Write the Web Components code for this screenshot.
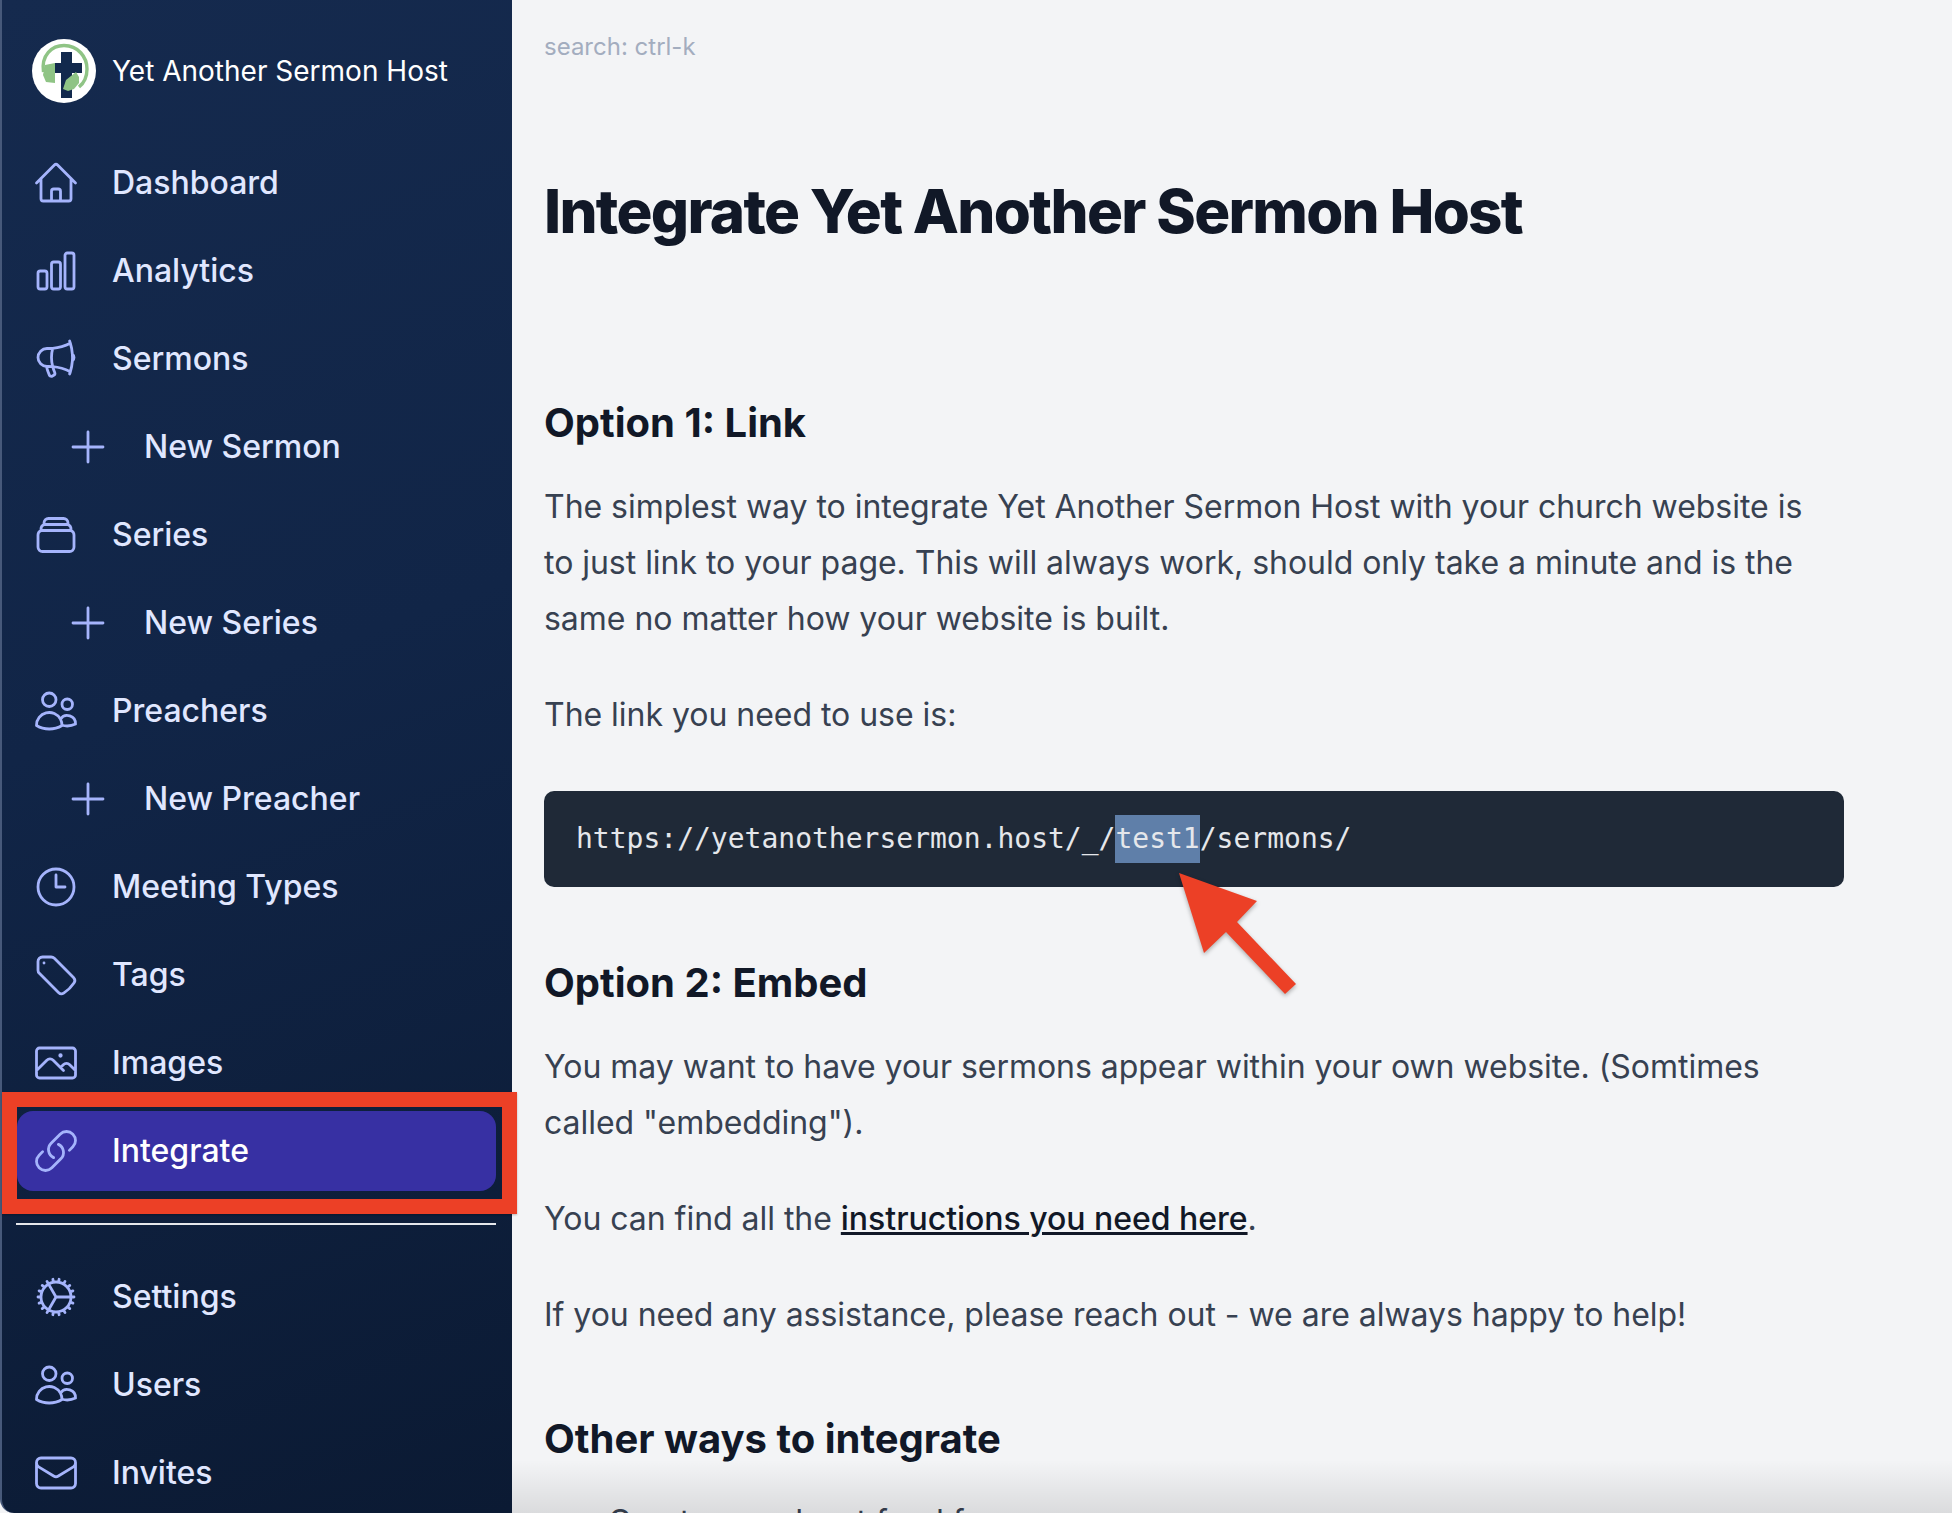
<!DOCTYPE html>
<html>
<head>
<meta charset="utf-8">
<style>
html,body{margin:0;height:100%;overflow:hidden;background:#f3f4f6;}
body{font-family:Inter,"Liberation Sans",sans-serif;}
</style>
</head>
<body>
<sermon-app>
  <sermon-sidebar slot="side">
    <brand-row>Yet Another Sermon Host</brand-row>
    <nav-item icon="home">Dashboard</nav-item>
    <nav-item icon="chart">Analytics</nav-item>
    <nav-item icon="mega">Sermons</nav-item>
    <nav-item icon="plus" sub>New Sermon</nav-item>
    <nav-item icon="stack">Series</nav-item>
    <nav-item icon="plus" sub>New Series</nav-item>
    <nav-item icon="users">Preachers</nav-item>
    <nav-item icon="plus" sub>New Preacher</nav-item>
    <nav-item icon="clock">Meeting Types</nav-item>
    <nav-item icon="tag">Tags</nav-item>
    <nav-item icon="image">Images</nav-item>
    <nav-item icon="link" active>Integrate</nav-item>
    <nav-rule></nav-rule>
    <nav-item icon="cog">Settings</nav-item>
    <nav-item icon="users">Users</nav-item>
    <nav-item icon="mail">Invites</nav-item>
  </sermon-sidebar>
  <integrate-page></integrate-page>
</sermon-app>

<template id="icons">
  <svg data-i="home" viewBox="0 0 24 24"><path d="M2.25 12l8.954-8.955c.44-.439 1.152-.439 1.591 0L21.75 12M4.5 9.75v10.125c0 .621.504 1.125 1.125 1.125H9.75v-4.875c0-.621.504-1.125 1.125-1.125h2.25c.621 0 1.125.504 1.125 1.125V21h4.125c.621 0 1.125-.504 1.125-1.125V9.75M8.25 21h8.25"/></svg>
  <svg data-i="chart" viewBox="0 0 24 24"><path d="M3 13.125C3 12.504 3.504 12 4.125 12h2.25c.621 0 1.125.504 1.125 1.125v6.75C7.5 20.496 6.996 21 6.375 21h-2.25A1.125 1.125 0 013 19.875v-6.75zM9.75 8.625c0-.621.504-1.125 1.125-1.125h2.25c.621 0 1.125.504 1.125 1.125v11.25c0 .621-.504 1.125-1.125 1.125h-2.25a1.125 1.125 0 01-1.125-1.125V8.625zM16.5 4.125c0-.621.504-1.125 1.125-1.125h2.25C20.496 3 21 3.504 21 4.125v15.75c0 .621-.504 1.125-1.125 1.125h-2.25a1.125 1.125 0 01-1.125-1.125V4.125z"/></svg>
  <svg data-i="mega" viewBox="0 0 24 24"><path d="M10.34 15.84c-.688-.06-1.386-.09-2.09-.09H7.5a4.5 4.5 0 110-9h.75c.704 0 1.402-.03 2.09-.09m0 9.18c.253.962.584 1.892.985 2.783.247.55.06 1.21-.463 1.511l-.657.38c-.551.318-1.26.117-1.527-.461a20.845 20.845 0 01-1.44-4.282m3.102.069a18.03 18.03 0 01-.59-4.59c0-1.586.205-3.124.59-4.59m0 9.18a23.848 23.848 0 018.835 2.535M10.34 6.66a23.847 23.847 0 008.835-2.535m0 0A23.74 23.74 0 0018.795 3m.38 1.125a23.91 23.91 0 011.014 5.395m-1.014 8.855c-.118.38-.245.754-.38 1.125m.38-1.125a23.91 23.91 0 001.014-5.395m0-3.46c.495.413.811 1.035.811 1.73 0 .695-.316 1.317-.811 1.73m0-3.46a24.347 24.347 0 010 3.46"/></svg>
  <svg data-i="plus" viewBox="0 0 24 24"><path d="M12 4.5v15m7.5-7.5h-15"/></svg>
  <svg data-i="stack" viewBox="0 0 24 24"><path d="M6 6.878V6a2.25 2.25 0 012.25-2.25h7.5A2.25 2.25 0 0118 6v.878m-12 0c.235-.083.487-.128.75-.128h10.5c.263 0 .515.045.75.128m-12 0A2.251 2.251 0 004.5 9v.878m13.5-3A2.25 2.25 0 0119.5 9v.878m0 0a2.246 2.246 0 00-.75-.128H5.25c-.263 0-.515.045-.75.128m15 0A2.25 2.25 0 0121 12v6a2.25 2.25 0 01-2.25 2.25H5.25A2.25 2.25 0 013 18v-6c0-.98.626-1.813 1.5-2.122"/></svg>
  <svg data-i="users" viewBox="0 0 24 24"><path d="M15 19.128a9.38 9.38 0 002.625.372 9.337 9.337 0 004.121-.952 4.125 4.125 0 00-7.533-2.493M15 19.128v-.003c0-1.113-.285-2.16-.786-3.07M15 19.128v.106A12.318 12.318 0 018.624 21c-2.331 0-4.512-.645-6.374-1.766l-.001-.109a6.375 6.375 0 0111.964-3.07M12 6.375a3.375 3.375 0 11-6.75 0 3.375 3.375 0 016.75 0zm8.25 2.25a2.625 2.625 0 11-5.25 0 2.625 2.625 0 015.25 0z"/></svg>
  <svg data-i="clock" viewBox="0 0 24 24"><path d="M12 6v6h4.5m4.5 0a9 9 0 11-18 0 9 9 0 0118 0z"/></svg>
  <svg data-i="tag" viewBox="0 0 24 24"><path d="M9.568 3H5.25A2.25 2.25 0 003 5.25v4.318c0 .597.237 1.17.659 1.591l9.581 9.581c.699.699 1.78.872 2.607.33a18.095 18.095 0 005.223-5.223c.542-.827.369-1.908-.33-2.607L11.16 3.66A2.25 2.25 0 009.568 3z"/><path d="M6 6h.008v.008H6V6z"/></svg>
  <svg data-i="image" viewBox="0 0 24 24"><path d="M2.25 15.75l5.159-5.159a2.25 2.25 0 013.182 0l5.159 5.159m-1.5-1.5l1.409-1.409a2.25 2.25 0 013.182 0l2.909 2.909m-18 3.75h16.5a1.5 1.5 0 001.5-1.5V6a1.5 1.5 0 00-1.5-1.5H3.75A1.5 1.5 0 002.25 6v12a1.5 1.5 0 001.5 1.5zm10.5-11.25h.008v.008h-.008V8.25zm.375 0a.375.375 0 11-.75 0 .375.375 0 01.75 0z"/></svg>
  <svg data-i="link" viewBox="0 0 24 24"><path d="M13.19 8.688a4.5 4.5 0 011.242 7.244l-4.5 4.5a4.5 4.5 0 01-6.364-6.364l1.757-1.757m13.35-.622l1.757-1.757a4.5 4.5 0 00-6.364-6.364l-4.5 4.5a4.5 4.5 0 001.242 7.244"/></svg>
  <svg data-i="cog" viewBox="0 0 24 24"><path d="M4.5 12a7.5 7.5 0 0015 0m-15 0a7.5 7.5 0 1115 0m-15 0H3m16.5 0H21m-1.5 0H12m-8.457 3.077l1.41-.513m14.095-5.13l1.41-.513M5.106 17.785l1.15-.964m11.49-9.642l1.149-.964M7.501 19.795l.75-1.3m7.5-12.99l.75-1.3m-6.063 16.658l.26-1.477m2.605-14.772l.26-1.477m0 17.726l-.26-1.477M10.698 4.614l-.26-1.477M16.5 19.794l-.75-1.299M7.5 4.205L12 12m6.894 5.785l-1.149-.964M6.256 7.178l-1.15-.964m15.352 8.864l-1.41-.513M4.954 9.435l-1.41-.514M12.002 12l-3.75 6.495"/></svg>
  <svg data-i="mail" viewBox="0 0 24 24"><path d="M21.75 6.75v10.5a2.25 2.25 0 01-2.25 2.25h-15a2.25 2.25 0 01-2.25-2.25V6.75m19.5 0A2.25 2.25 0 0019.5 4.5h-15a2.25 2.25 0 00-2.25 2.25m19.5 0v.243a2.25 2.25 0 01-1.07 1.916l-7.5 4.615a2.25 2.25 0 01-2.36 0L3.32 8.91a2.25 2.25 0 01-1.07-1.916V6.75"/></svg>
</template>

<script>
const iconBank = document.getElementById('icons').content;

class SermonApp extends HTMLElement{
  constructor(){
    super();
    this.attachShadow({mode:'open'}).innerHTML=`
    <style>
      :host{display:grid;grid-template-columns:512px 1fr;height:1513px;overflow:hidden;position:relative;}
      .fade{position:absolute;left:512px;right:0;bottom:0;height:53px;pointer-events:none;
        background:linear-gradient(to bottom,rgba(0,0,0,0),rgba(0,0,0,.1));}
      /* red annotation round the active item */
      .frame{position:absolute;left:2px;top:1092px;width:515px;height:122px;box-sizing:border-box;
        border:15px solid #ec4026;box-shadow:0 1px 2px rgba(0,0,0,.25);}
    </style>
    <slot name="side"></slot><slot></slot><div class="fade"></div><div class="frame"></div>`;
  }
}

class SermonSidebar extends HTMLElement{
  constructor(){
    super();
    this.attachShadow({mode:'open'}).innerHTML=`
    <style>
      :host{display:flex;flex-direction:column;box-sizing:border-box;height:1513px;padding:27px 16px 0 15px;
        border-left:2px solid #47597a;border-bottom-left-radius:14px;
        background:linear-gradient(160deg,#152a4e 0%,#112547 45%,#0b1a33 100%);}
    </style>
    <slot></slot>`;
  }
}

class BrandRow extends HTMLElement{
  constructor(){
    super();
    this.attachShadow({mode:'open'}).innerHTML=`
    <style>
      :host{display:flex;align-items:center;gap:16px;height:88px;padding-left:15px;margin-bottom:28px;
        color:#fff;font-size:28px;flex:none;}
      svg{width:64px;height:64px;flex:none;}
    </style>
    <svg viewBox="0 0 64 64">
      <circle cx="32" cy="32" r="32" fill="#fff"/>
      <path d="M11.5 33C9 16 20 6.5 32 6.5 46 6.5 55 18 55 30c0 7-3 14-8 18" fill="none" stroke="#8fc485" stroke-width="3.4"/>
      <path d="M13 26l10-2v20l-9-1-3-7z" fill="#8fc485"/>
      <path d="M29 13h11v11h10v10H40v25H29V34h-6V24h6z" fill="#12294d"/>
      <path d="M31 50l3-9 10-8 3 5v6l-5 6-6 2z" fill="#8fc485"/>
    </svg>
    <slot></slot>`;
  }
}

class NavItem extends HTMLElement{
  constructor(){
    super();
    this.attachShadow({mode:'open'}).innerHTML=`
    <style>
      :host{display:flex;align-items:center;gap:32px;box-sizing:border-box;height:80px;margin-bottom:8px;padding:0 0 2px 17px;
        border-radius:16px;color:#e0e7ff;font-size:32px;font-weight:500;flex:none;}
      :host([sub]){padding-left:49px;}
      :host([active]){background:#3730a3;color:#fff;}
      svg{width:48px;height:48px;flex:none;fill:none;stroke:#a5b4fc;stroke-width:1.4;stroke-linecap:round;stroke-linejoin:round;margin:2px 0 0 -2px;}
    </style>
    <span id="i"></span><slot></slot>`;
    const src=iconBank.querySelector(`[data-i="${this.getAttribute('icon')}"]`);
    this.shadowRoot.getElementById('i').replaceWith(src.cloneNode(true));
  }
}

class NavRule extends HTMLElement{
  constructor(){
    super();
    this.attachShadow({mode:'open'}).innerHTML=`
    <style>:host{display:block;height:2px;background:#e5e7eb;margin:24px 0 32px -1px;flex:none;}</style>`;
  }
}

class CodeBlock extends HTMLElement{
  constructor(){
    super();
    this.attachShadow({mode:'open'}).innerHTML=`
    <style>
      :host{display:block;box-sizing:border-box;background:#1f2937;border-radius:10px;
        padding:24px 32px;margin:48px 0 0;color:#e5e7eb;
        font:28px/48px "DejaVu Sans Mono","Liberation Mono",monospace;}
      ::slotted(mark){display:inline-block;background:#5f7fa9;color:#e5e7eb;}
    </style>
    <slot></slot>`;
  }
}

class IntegratePage extends HTMLElement{
  constructor(){
    super();
    this.attachShadow({mode:'open'}).innerHTML=`
    <style>
      :host{display:block;box-sizing:border-box;padding:31px 32px 0;height:1513px;overflow:hidden;color:#374151;position:relative;}
      .search{color:#a3adbf;font-size:24px;line-height:32px;height:32px;}
      article{width:1300px;}
      h1{margin:118px 0 154px;color:#111827;font-size:60px;line-height:60px;font-weight:800;letter-spacing:-1.7px;}
      h2{margin:68px 0 0;color:#111827;font-size:40px;line-height:56px;font-weight:700;}
      h1 + h2{margin-top:0;}
      p{margin:0;max-width:1290px;font-size:32px;line-height:56px;letter-spacing:-.03px;}
      h2 + p{margin-top:28px;}
      p + p{margin-top:40px;}
      a{color:#111827;font-weight:500;text-decoration:underline;text-decoration-thickness:3px;}
      ul{margin:27px 0 0;padding-left:64px;font-size:32px;line-height:56px;}
      li::marker{color:#d1d5db;}
      svg.arrow{position:absolute;left:667px;top:873px;width:117px;height:121px;overflow:visible;filter:drop-shadow(0 2px 2px rgba(0,0,0,.3));}
    </style>
    <div class="search">search: ctrl-k</div>
    <article>
      <h1>Integrate Yet Another Sermon Host</h1>
      <h2>Option 1: Link</h2>
      <p>The simplest way to integrate Yet Another Sermon Host with your church website is to just link to your page. This will always work, should only take a minute and is the same no matter how your website is built.</p>
      <p>The link you need to use is:</p>
      <code-block>https://yetanothersermon.host/_/<mark>test1</mark>/sermons/</code-block>
      <h2>Option 2: Embed</h2>
      <p>You may want to have your sermons appear within your own website. (Somtimes called "embedding").</p>
      <p>You can find all the <a href="#">instructions you need here</a>.</p>
      <p>If you need any assistance, please reach out - we are always happy to help!</p>
      <h2>Other ways to integrate</h2>
      <ul><li>Create a podcast feed for your sermons</li></ul>
    </article>
    <svg class="arrow" viewBox="0 0 117 121"><path d="M0 0 78 28 58 49 117 111 106 121 47 59 25 80z" fill="#ec4026"/></svg>`;
  }
}

customElements.define('sermon-app',SermonApp);
customElements.define('sermon-sidebar',SermonSidebar);
customElements.define('brand-row',BrandRow);
customElements.define('nav-item',NavItem);
customElements.define('nav-rule',NavRule);
customElements.define('code-block',CodeBlock);
customElements.define('integrate-page',IntegratePage);
</script>
</body>
</html>
